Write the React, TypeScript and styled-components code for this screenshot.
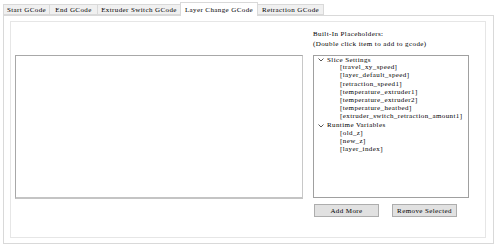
import React from 'react'
import styled, { createGlobalStyle } from 'styled-components'

const GlobalStyle = createGlobalStyle`
  html, body {
    margin: 0;
    padding: 0;
    background: #ffffff;
  }
  body {
    font-family: "Liberation Serif", "DejaVu Serif", serif;
    font-size: 7px;
    letter-spacing: 0.4px;
    color: #000000;
  }
`

type TabData = { label: string; width: number; active?: boolean }

const tabs: TabData[] = [
  { label: 'Start GCode', width: 47 },
  { label: 'End GCode', width: 49 },
  { label: 'Extruder Switch GCode', width: 84 },
  { label: 'Layer Change GCode', width: 78, active: true },
  { label: 'Retraction GCode', width: 67 },
]

type Group = { name: string; items: string[] }

const groups: Group[] = [
  {
    name: 'Slice Settings',
    items: [
      '[travel_xy_speed]',
      '[layer_default_speed]',
      '[retraction_speed1]',
      '[temperature_extruder1]',
      '[temperature_extruder2]',
      '[temperature_heatbed]',
      '[extruder_switch_retraction_amount1]',
    ],
  },
  {
    name: 'Runtime Variables',
    items: ['[old_z]', '[new_z]', '[layer_index]'],
  },
]

const Chevron = () => (
  <svg width="6" height="4" viewBox="0 0 6 4">
    <path d="M0.5 0.5 L3 3 L5.5 0.5" fill="none" stroke="#444" strokeWidth="0.9" />
  </svg>
)

export default function App() {
  return (
    <>
      <GlobalStyle />
      <Page>
        <TabBar>
          {tabs.map((t) => (
            <Tab key={t.label} active={!!t.active} w={t.width}>
              {t.label}
            </Tab>
          ))}
        </TabBar>
        <Pane>
          <Frame>
            <Editor />
            <SideColumn>
              <Caption>Built-In Placeholders:</Caption>
              <Caption>(Double click item to add to gcode)</Caption>
              <Tree>
                {groups.map((g) => (
                  <React.Fragment key={g.name}>
                    <GroupRow>
                      <Chevron />
                      <span>{g.name}</span>
                    </GroupRow>
                    {g.items.map((item) => (
                      <ItemRow key={item}>{item}</ItemRow>
                    ))}
                  </React.Fragment>
                ))}
              </Tree>
              <ButtonRow>
                <Button>Add More</Button>
                <Button>Remove Selected</Button>
              </ButtonRow>
            </SideColumn>
          </Frame>
        </Pane>
      </Page>
    </>
  )
}

const Page = styled.div`
  width: 500px;
  height: 247px;
  display: flex;
  flex-direction: column;
  box-sizing: border-box;
  padding: 0 6px 3px 3px;
`

const TabBar = styled.div`
  display: flex;
  align-items: flex-end;
  height: 15px;
  padding-left: 1px;
  position: relative;
  z-index: 1;
`

type TabProps = { active: boolean; w: number }

const Tab = styled.div<TabProps>`
  box-sizing: border-box;
  width: ${(p: TabProps) => p.w}px;
  height: ${(p: TabProps) => (p.active ? 14 : 11)}px;
  margin-left: -1px;
  margin-bottom: ${(p: TabProps) => (p.active ? -1 : 0)}px;
  display: flex;
  align-items: center;
  justify-content: center;
  white-space: nowrap;
  background: ${(p: TabProps) => (p.active ? '#ffffff' : '#f0f0f0')};
  border: 1px solid #d9d9d9;
  border-bottom: ${(p: TabProps) => (p.active ? 'none' : '1px solid #d9d9d9')};
`

const Pane = styled.div`
  flex: 1;
  box-sizing: border-box;
  border: 1px solid #d9d9d9;
  background: #ffffff;
  padding: 5px 7px 5px 6px;
  display: flex;
`

const Frame = styled.div`
  flex: 1;
  box-sizing: border-box;
  border: 1px solid #e6e6e6;
  display: flex;
  align-items: flex-start;
  padding: 7px 0 0 4px;
  gap: 10px;
`

const Editor = styled.div`
  box-sizing: border-box;
  width: 288px;
  height: 144px;
  margin-top: 26px;
  background: #ffffff;
  border: 1px solid #a8a8a8;
  border-right-color: #c8c8c8;
  border-bottom: 2px solid #c4c4c4;
`

const SideColumn = styled.div`
  display: flex;
  flex-direction: column;
  width: 156px;
`

const Caption = styled.div`
  line-height: 10px;
  height: 10px;
  white-space: nowrap;
`

const Tree = styled.div`
  box-sizing: border-box;
  height: 143px;
  margin-top: 6px;
  border: 1px solid #a0a0a0;
  padding: 0 0 0 4px;
  display: flex;
  flex-direction: column;
`

const GroupRow = styled.div`
  display: flex;
  align-items: center;
  gap: 3px;
  height: 8.2px;
  line-height: 7px;
  white-space: nowrap;
`

const ItemRow = styled.div`
  height: 8.2px;
  line-height: 7px;
  padding-left: 22px;
  white-space: nowrap;
`

const ButtonRow = styled.div`
  display: flex;
  gap: 13px;
  margin-top: 6px;
  padding-left: 1px;
`

const Button = styled.div`
  box-sizing: border-box;
  width: 65px;
  height: 13px;
  display: flex;
  align-items: center;
  justify-content: center;
  background: #e1e1e1;
  border: 1px solid #adadad;
`
